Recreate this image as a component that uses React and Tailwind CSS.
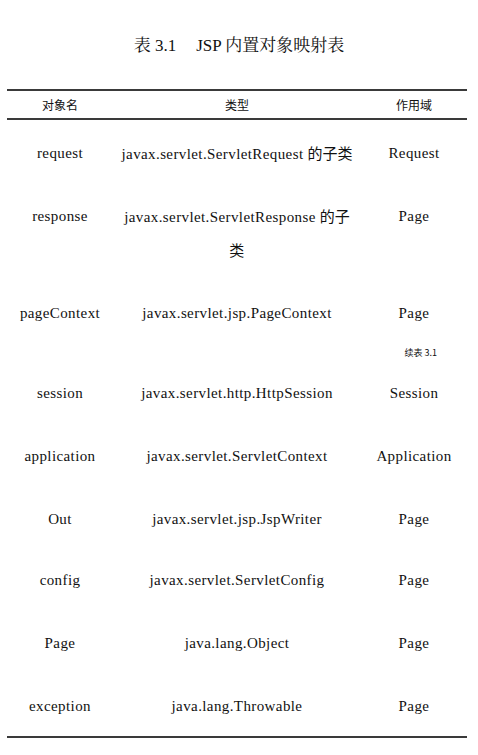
export default function App() {
  const serif = { fontFamily: '"Liberation Serif", "Noto Serif CJK SC", "Noto Sans CJK SC", serif' };
  const rows = [
    { a: "request", b: "javax.servlet.ServletRequest", bz: " 的子类", c: "Request", h: "h-[63px]" },
    { a: "response", b: "javax.servlet.ServletResponse", bz: " 的子", b2: "类", c: "Page", h: "h-[97px]" },
    { a: "pageContext", b: "javax.servlet.jsp.PageContext", c: "Page", h: "h-[42px]" },
    { cont: true },
    { a: "session", b: "javax.servlet.http.HttpSession", c: "Session", h: "h-[63px]" },
    { a: "application", b: "javax.servlet.ServletContext", c: "Application", h: "h-[63px]" },
    { a: "Out", b: "javax.servlet.jsp.JspWriter", c: "Page", h: "h-[61px]" },
    { a: "config", b: "javax.servlet.ServletConfig", c: "Page", h: "h-[63px]" },
    { a: "Page", b: "java.lang.Object", c: "Page", h: "h-[63px]" },
    { a: "exception", b: "java.lang.Throwable", c: "Page", h: "h-[40px]" },
  ];
  return (
    <div className="w-[478px] h-[755px] bg-white text-[#111] overflow-hidden" style={serif}>
      <div className="pt-[36px] text-center text-[17px] leading-[20px]">
        <span>表 3.1</span>
        <span className="ml-[20px]">JSP 内置对象映射表</span>
      </div>
      <div className="mx-[7px] mt-[33px] w-[460px]">
        <div className="h-[2px] bg-[#3a3a3a]" />
        <div
          className="grid grid-cols-[106px_248px_106px] h-[27px] items-center text-[12px]"
          style={{ fontFamily: '"Noto Sans CJK SC", sans-serif' }}
        >
          <div className="text-center">对象名</div>
          <div className="text-center">类型</div>
          <div className="text-center">作用域</div>
        </div>
        <div className="h-[2px] bg-[#3a3a3a]" />
        <div className="pt-[23px] text-[15px] leading-[20px] tracking-[0.4px]">
          {rows.map((r, i) =>
            r.cont ? (
              <div key={i} className="h-[38px] flex justify-end pr-[30px]">
                <span
                  className="text-[9px] leading-[16px] tracking-normal"
                  style={{ fontFamily: '"Noto Sans CJK SC", sans-serif' }}
                >
                  续表 3.1
                </span>
              </div>
            ) : (
              <div key={i} className={`grid grid-cols-[106px_248px_106px] ${r.h}`}>
                <div className="text-center">{r.a}</div>
                <div className="text-center">
                  <div className="whitespace-nowrap">
                    {r.b}
                    {r.bz && (
                      <span className="tracking-normal ml-[4px]" style={{ fontFamily: '"Noto Sans CJK SC", sans-serif' }}>
                        {r.bz.trim()}
                      </span>
                    )}
                  </div>
                  {r.b2 && (
                    <div className="mt-[13px]" style={{ fontFamily: '"Noto Sans CJK SC", sans-serif' }}>
                      {r.b2}
                    </div>
                  )}
                </div>
                <div className="text-center">{r.c}</div>
              </div>
            )
          )}
        </div>
        <div className="h-[2px] bg-[#3a3a3a]" />
      </div>
    </div>
  );
}
